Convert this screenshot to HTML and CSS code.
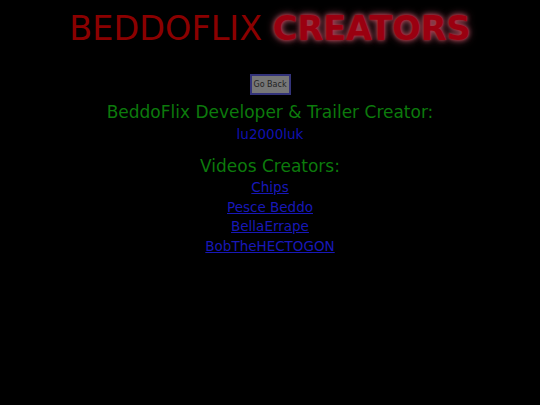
FILE: index.html
```html
<!DOCTYPE html>
<html>
<head>
<meta charset="utf-8">
<link rel="stylesheet" href="styles.css">
</head>
<body>
<div class="page">
  <h1 class="title">BEDDOFLIX <span class="glow">CREATORS</span></h1>
  <button class="back">Go Back</button>
  <h2 class="heading">BeddoFlix Developer &amp; Trailer Creator:</h2>
  <div class="dev">lu2000luk</div>
  <h2 class="heading second">Videos Creators:</h2>
  <ul class="links">
    <li><a href="#">Chips</a></li>
    <li><a href="#">Pesce Beddo</a></li>
    <li><a href="#">BellaErrape</a></li>
    <li><a href="#">BobTheHECTOGON</a></li>
  </ul>
</div>
</body>
</html>
```
FILE: styles.css
```css
html, body {
  margin: 0;
  padding: 0;
  background: #000;
}
body {
  font-family: "DejaVu Sans", sans-serif;
  width: 540px;
  height: 405px;
  overflow: hidden;
}
.page {
  display: flex;
  flex-direction: column;
  align-items: center;
}
.title {
  margin: 8px 0 0 0;
  font-size: 33.5px;
  font-weight: normal;
  color: #8b0000;
  line-height: 42px;
}
.glow {
  font-weight: bold;
  color: #9a0010;
  text-shadow: 0 0 2px #b02030, 0 0 5px #b05060, 0 0 9px #904050;
}
.back {
  margin-top: 24px;
  font-family: "DejaVu Sans", sans-serif;
  font-size: 8px;
  white-space: nowrap;
  background: #777;
  color: #222;
  border: 2px solid #33337a;
  padding: 0;
  width: 41px;
  height: 21px;
}
.heading {
  margin: 5px 0 0 0;
  font-size: 17px;
  font-weight: normal;
  color: #0c7a0c;
  line-height: 24px;
}
.second {
  margin-top: 10px;
}
.dev {
  color: #1010b0;
  font-size: 13.5px;
  line-height: 20px;
}
.links {
  list-style: none;
  margin: 0;
  padding: 0;
  text-align: center;
}
.links li {
  font-size: 13.5px;
  line-height: 19.5px;
}
.links a {
  color: #1818b8;
}
```
